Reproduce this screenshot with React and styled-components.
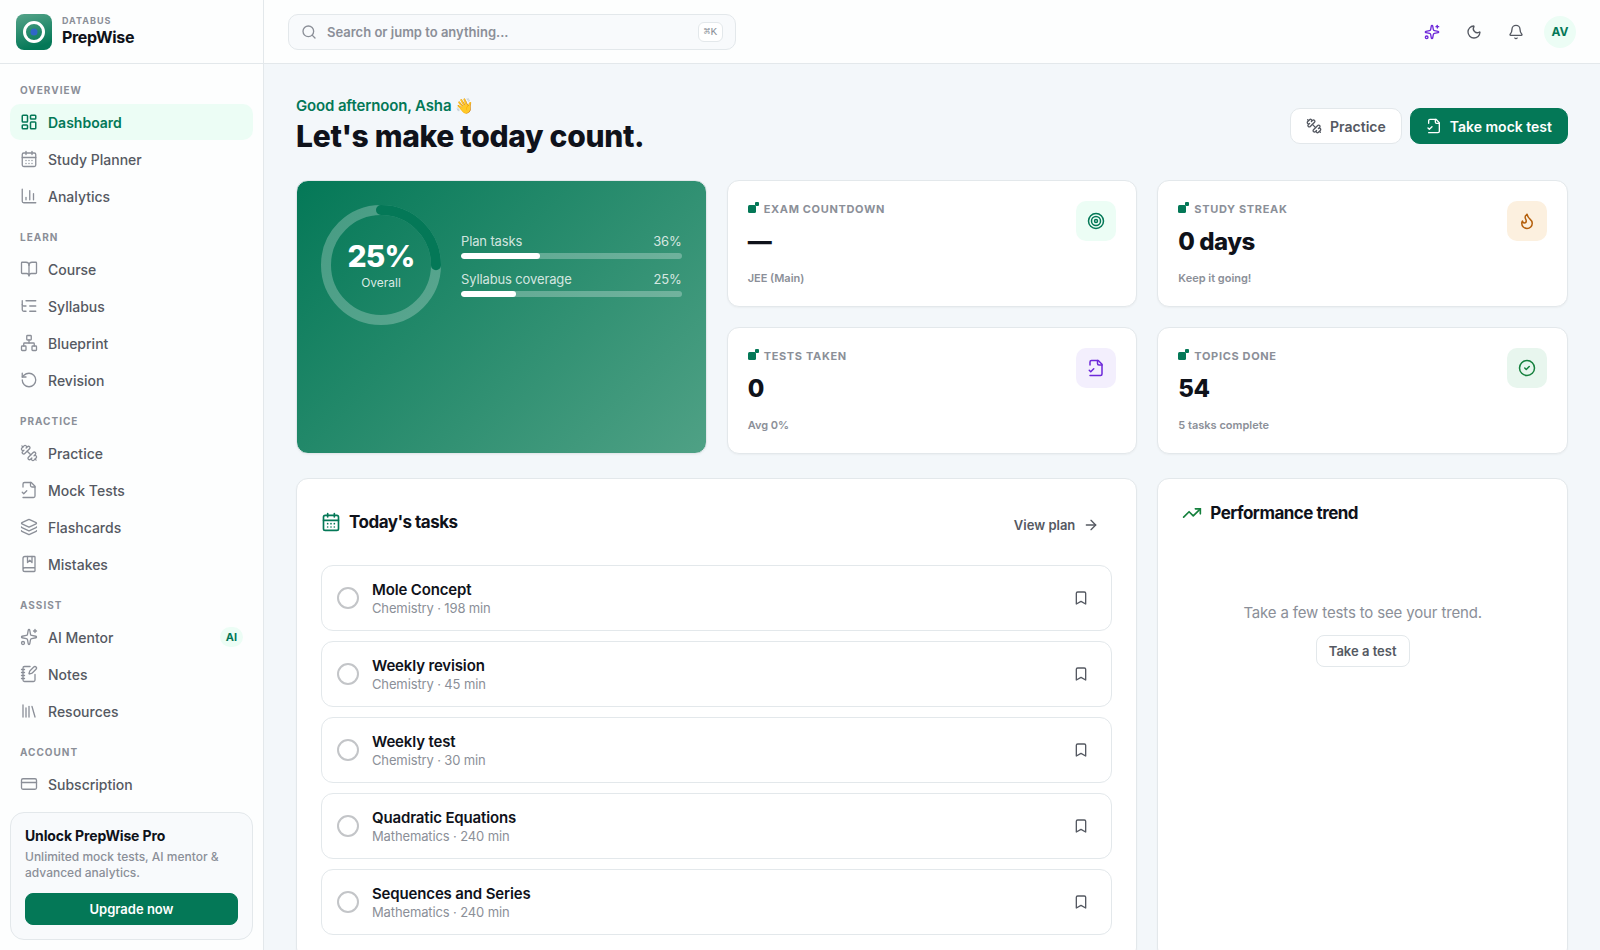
import React, { useState } from 'react'
import styled, { createGlobalStyle } from 'styled-components'
import {
    ArrowRight, Bell, BookMarked, BookOpen, Bookmark, CalendarDays, ChartColumn, CircleCheck, CreditCard,
    Flame, Layers, LayoutDashboard, Library, ListTree, Moon, Network, NotebookPen, RotateCcw,
    Search, Sparkles, Target, TrendingUp,
} from 'lucide-react'

const GlobalStyle = createGlobalStyle`
    *, *::before, *::after {
        box-sizing: border-box;
    }
    body {
        margin: 0;
        background: #f3f7fa;
        color: #0f121a;
        font-family: Inter, "Liberation Sans", sans-serif;
        font-size: 14px;
    }
    h1, h2, p {
        margin: 0;
    }
    a {
        color: inherit;
        text-decoration: none;
    }
    button, input {
        font-family: inherit;
    }
    button {
        cursor: pointer;
    }
    svg {
        flex-shrink: 0;
    }
`;

const Shell = styled.div`
    display: grid;
    grid-template-columns: 264px minmax(0, 1fr);
    height: 100vh;
`;

/* sidebar */

const Sidebar = styled.aside`
    display: flex;
    flex-direction: column;
    min-height: 0;
    background: #fdfefe;
    border-right: 1px solid #e3e8eb;
`;

const Brand = styled.a`
    display: flex;
    align-items: center;
    gap: 10px;
    height: 64px;
    padding: 0 16px;
    flex-shrink: 0;
    border-bottom: 1px solid #e3e8eb;
`;

const BrandText = styled.div`
    display: flex;
    flex-direction: column;
    padding-bottom: 2px;
`;

const BrandOwner = styled.span`
    color: #8b8f98;
    font-size: 9px;
    font-weight: 700;
    line-height: 12px;
    letter-spacing: 1px;
    text-transform: uppercase;
`;

const BrandName = styled.span`
    font-size: 16px;
    font-weight: 700;
    line-height: 20px;
    letter-spacing: -0.02em;
`;

const Nav = styled.nav`
    flex: 1;
    min-height: 0;
    display: flex;
    flex-direction: column;
    gap: 17px;
    padding: 20px 10px 0;
    overflow-y: auto;
    scrollbar-width: none;
`;

const NavGroup = styled.div`
    display: flex;
    flex-direction: column;
    gap: 1px;
`;

const NavLabel = styled.span`
    padding: 0 10px;
    margin-bottom: 7px;
    color: #8b8f98;
    font-size: 10px;
    font-weight: 700;
    line-height: 12px;
    letter-spacing: 1px;
    text-transform: uppercase;
`;

const NavItem = styled.a`
    display: flex;
    align-items: center;
    gap: 10px;
    height: 36px;
    flex-shrink: 0;
    padding: 0 10px;
    border-radius: 10px;
    background: ${({ $active }) => $active ? '#ecfdf5' : 'transparent'};
    color: ${({ $active }) => $active ? '#047857' : '#555962'};
    font-size: 14px;
    font-weight: ${({ $active }) => $active ? 600 : 500};

    svg {
        color: ${({ $active }) => $active ? '#047857' : '#8b8f98'};
    }
`;

const NavBadge = styled.span`
    margin-left: auto;
    padding: 0 6px;
    border-radius: 10px;
    background: #ecfdf5;
    color: #047857;
    font-size: 11px;
    font-weight: 700;
    line-height: 20px;
`;

const Promo = styled.section`
    margin: 10px;
    padding: 14px;
    border: 1px solid #e3e8eb;
    border-radius: 14px;
    background: #f8fafc;
`;

const PromoTitle = styled.h2`
    font-size: 14px;
    font-weight: 700;
    line-height: 18px;
    letter-spacing: -0.01em;
`;

const PromoText = styled.p`
    margin: 4px 0 12px;
    color: #8b8f98;
    font-size: 12px;
    font-weight: 500;
    line-height: 16px;
`;

/* buttons */

const Button = styled.button`
    display: inline-flex;
    align-items: center;
    justify-content: center;
    gap: 8px;
    width: ${({ $wide }) => $wide ? '100%' : 'auto'};
    height: ${({ $small }) => $small ? '32px' : '36px'};
    padding: 0 ${({ $small }) => $small ? '12px' : '15px'};
    border: 1px solid ${({ $variant }) => $variant === 'primary' ? '#047857' : $variant === 'ghost' ? 'transparent' : '#e3e8eb'};
    border-radius: ${({ $small }) => $small ? '8px' : '10px'};
    background: ${({ $variant }) => $variant === 'primary' ? '#047857' : $variant === 'ghost' ? 'transparent' : '#fff'};
    color: ${({ $variant }) => $variant === 'primary' ? '#fff' : '#555962'};
    font-size: ${({ $small }) => $small ? '13px' : '14px'};
    font-weight: 600;
    white-space: nowrap;
`;

const IconButton = styled.button`
    display: inline-flex;
    align-items: center;
    justify-content: center;
    width: ${({ $size }) => $size}px;
    height: ${({ $size }) => $size}px;
    padding: 0;
    border: 0;
    border-radius: 8px;
    background: transparent;
    color: ${({ $color }) => $color || '#555962'};
`;

/* top bar */

const Page = styled.div`
    display: flex;
    flex-direction: column;
    min-width: 0;
    min-height: 0;
`;

const TopBar = styled.header`
    display: flex;
    align-items: center;
    justify-content: space-between;
    gap: 24px;
    height: 64px;
    flex-shrink: 0;
    padding: 0 24px;
    border-bottom: 1px solid #e3e8eb;
    background: #fdfefe;
`;

const SearchBox = styled.label`
    display: flex;
    align-items: center;
    gap: 10px;
    flex: 0 1 448px;
    height: 36px;
    padding: 0 12px;
    border: 1px solid #e3e8eb;
    border-radius: 10px;
    background: #f8fafc;
    color: #8b8f98;
`;

const SearchInput = styled.input`
    flex: 1;
    min-width: 0;
    padding: 0;
    border: 0;
    outline: 0;
    background: transparent;
    font-size: 13px;
    font-weight: 600;

    &::placeholder {
        color: #8b8f98;
    }
`;

const Kbd = styled.kbd`
    padding: 0 5px;
    border: 1px solid #e3e8eb;
    border-radius: 6px;
    background: #fff;
    font-family: "Liberation Mono", monospace;
    font-size: 11px;
    line-height: 18px;
`;

const TopActions = styled.div`
    display: flex;
    align-items: center;
    gap: 6px;
`;

const Avatar = styled.button`
    width: 32px;
    height: 32px;
    margin-left: 4px;
    padding: 0;
    border: 0;
    border-radius: 50%;
    background: #ecfdf5;
    color: #047857;
    font-size: 12px;
    font-weight: 700;
`;

/* content */

const Content = styled.main`
    flex: 1;
    min-height: 0;
    padding: 32px;
    overflow-y: auto;
    scrollbar-width: none;
`;

const PageHead = styled.div`
    display: flex;
    align-items: center;
    justify-content: space-between;
    margin-bottom: 24px;
`;

const Greeting = styled.p`
    color: #047857;
    font-size: 15px;
    font-weight: 600;
    line-height: 20px;
    letter-spacing: -0.01em;
`;

const PageTitle = styled.h1`
    font-size: 30px;
    font-weight: 800;
    line-height: 40px;
    letter-spacing: -0.01em;
`;

const HeadActions = styled.div`
    display: flex;
    gap: 8px;
`;

const Grid = styled.div`
    display: grid;
    grid-template-columns: repeat(3, minmax(0, 1fr));
    gap: 20px;
    margin-bottom: 24px;
`;

const Card = styled.section`
    grid-column: span ${({ $span }) => $span || 1};
    padding: ${({ $padding }) => $padding || 24}px;
    border: 1px solid #e3e8eb;
    border-radius: 12px;
    background: #fff;
    box-shadow: 0 1px 2px rgba(15, 18, 26, 0.04);
`;

const ProgressCard = styled(Card)`
    grid-row: span 2;
    display: flex;
    align-items: flex-start;
    gap: 20px;
    background: linear-gradient(135deg, #047857, #4fa185);
    color: #fff;
`;

const Ring = styled.div`
    position: relative;
    width: 120px;
    height: 120px;
    flex-shrink: 0;
`;

const RingLabel = styled.div`
    position: absolute;
    inset: 0;
    display: flex;
    flex-direction: column;
    align-items: center;
    justify-content: center;
    font-size: 12px;
    line-height: 18px;
    color: rgba(255, 255, 255, 0.85);

    strong {
        color: #fff;
        font-size: 30px;
        font-weight: 800;
        line-height: 36px;
        letter-spacing: -0.03em;
    }
`;

const Meters = styled.div`
    flex: 1;
    display: flex;
    flex-direction: column;
    justify-content: center;
    gap: 12px;
    height: 120px;
`;

const MeterHead = styled.div`
    display: flex;
    justify-content: space-between;
    margin-bottom: 4px;
    color: rgba(255, 255, 255, 0.8);
    font-size: 13px;
    line-height: 16px;
    letter-spacing: -0.01em;
`;

const MeterTrack = styled.div`
    height: 6px;
    border-radius: 3px;
    background: rgba(255, 255, 255, 0.28);
    overflow: hidden;
`;

const MeterFill = styled.div`
    height: 100%;
    border-radius: 3px;
    background: #fff;
`;

const StatCard = styled(Card)`
    display: flex;
    align-items: flex-start;
    justify-content: space-between;
`;

const StatLabel = styled.p`
    display: flex;
    align-items: center;
    gap: 5px;
    color: #8b8f98;
    font-size: 11px;
    font-weight: 700;
    line-height: 16px;
    letter-spacing: 0.06em;
    text-transform: uppercase;
`;

const StatValue = styled.p`
    margin: 8px 0 12px;
    font-size: 24px;
    font-weight: 800;
    line-height: 33px;
    letter-spacing: -0.02em;
`;

const StatNote = styled.p`
    color: #8b8f98;
    font-size: 11px;
    font-weight: 600;
    line-height: 16px;
`;

const StatIcon = styled.div`
    display: flex;
    align-items: center;
    justify-content: center;
    width: 40px;
    height: 40px;
    border-radius: 10px;
    background: ${({ $bg }) => $bg};
    color: ${({ $color }) => $color};
`;

const CardTitle = styled.h2`
    display: flex;
    align-items: center;
    gap: 8px;
    font-size: 17px;
    font-weight: 700;
    line-height: 20px;
    letter-spacing: -0.03em;

    svg {
        color: ${({ $color }) => $color};
    }
`;

const TasksHead = styled.div`
    display: flex;
    align-items: center;
    justify-content: space-between;
    height: 38px;
    margin-bottom: 24px;

    ${Button} {
        align-self: flex-end;
    }
`;

const TaskList = styled.ul`
    display: flex;
    flex-direction: column;
    gap: 10px;
    margin: 0;
    padding: 0;
    list-style: none;
`;

const TaskRow = styled.li`
    display: flex;
    align-items: center;
    justify-content: space-between;
    padding: 14px 14px 14px 15px;
    border: 1px solid #e3e8eb;
    border-radius: 12px;
`;

const TaskLabel = styled.label`
    display: flex;
    align-items: center;
    gap: 13px;
    cursor: pointer;
`;

const TaskCheck = styled.input`
    appearance: none;
    width: 22px;
    height: 22px;
    margin: 0;
    border: 2px solid #c3c5c8;
    border-radius: 50%;
    background: #fff;

    &:checked {
        border-color: #047857;
        background: #047857;
    }
`;

const TaskName = styled.span`
    display: block;
    font-size: 15px;
    font-weight: 600;
    line-height: 20px;
    letter-spacing: -0.01em;
`;

const TaskMeta = styled.span`
    display: block;
    color: #8b8f98;
    font-size: 13px;
    line-height: 16px;
    letter-spacing: -0.01em;
`;

const Empty = styled.div`
    display: flex;
    flex-direction: column;
    align-items: center;
    gap: 12px;
    padding: 80px 0;
    color: #8b8f98;
    font-size: 15px;
    line-height: 20px;
    letter-spacing: -0.01em;
`;

function Logo() {
    return (
        <svg width="36" height="36" viewBox="0 0 36 36" aria-hidden="true">
            <defs>
                <linearGradient id="logo" x1="0" y1="0" x2="0.3" y2="1">
                    <stop offset="0" stopColor="#56a48a" />
                    <stop offset="1" stopColor="#047857" />
                </linearGradient>
            </defs>
            <rect width="36" height="36" rx="8" fill="url(#logo)" />
            <circle cx="18" cy="18" r="9.5" fill="none" stroke="#fff" strokeWidth="3" />
            <circle cx="18" cy="18" r="3.5" fill="#2f66c8" />
        </svg>
    )
}

function Dumbbell({ size = 18, strokeWidth = 2 }) {
    return (
        <svg width={size} height={size} viewBox="0 0 24 24" fill="none" stroke="currentColor" strokeWidth={strokeWidth} strokeLinecap="round" strokeLinejoin="round" aria-hidden="true">
            <path d="M14.4 14.4 9.6 9.6" />
            <path d="M18.657 21.485a2 2 0 1 1-2.829-2.828l-1.767 1.768a2 2 0 1 1-2.829-2.829l6.364-6.364a2 2 0 1 1 2.829 2.829l-1.768 1.767a2 2 0 1 1 2.828 2.829z" />
            <path d="m21.5 21.5-1.4-1.4" />
            <path d="M3.9 3.9 2.5 2.5" />
            <path d="M6.404 12.768a2 2 0 1 1-2.829-2.829l1.768-1.767a2 2 0 1 1-2.828-2.829l2.828-2.828a2 2 0 1 1 2.829 2.828l1.767-1.768a2 2 0 1 1 2.829 2.829z" />
        </svg>
    )
}

function FileCheck({ size = 18, strokeWidth = 2 }) {
    return (
        <svg width={size} height={size} viewBox="0 0 24 24" fill="none" stroke="currentColor" strokeWidth={strokeWidth} strokeLinecap="round" strokeLinejoin="round" aria-hidden="true">
            <path d="M4 22h14a2 2 0 0 0 2-2V7l-5-5H6a2 2 0 0 0-2 2v4" />
            <path d="M14 2v4a2 2 0 0 0 2 2h4" />
            <path d="m3 15 2 2 4-4" />
        </svg>
    )
}

function StatMark() {
    return (
        <svg width="11" height="16" viewBox="0 0 11 16" fill="#047857" aria-hidden="true">
            <rect x="0" y="4" width="8" height="8" rx="1.5" />
            <rect x="7" y="1" width="4" height="4" rx="1" />
        </svg>
    )
}

const NAV = [
    { label: 'Overview', items: [
        { name: 'Dashboard', icon: LayoutDashboard },
        { name: 'Study Planner', icon: CalendarDays },
        { name: 'Analytics', icon: ChartColumn },
    ] },
    { label: 'Learn', items: [
        { name: 'Course', icon: BookOpen },
        { name: 'Syllabus', icon: ListTree },
        { name: 'Blueprint', icon: Network },
        { name: 'Revision', icon: RotateCcw },
    ] },
    { label: 'Practice', items: [
        { name: 'Practice', icon: Dumbbell },
        { name: 'Mock Tests', icon: FileCheck },
        { name: 'Flashcards', icon: Layers },
        { name: 'Mistakes', icon: BookMarked },
    ] },
    { label: 'Assist', items: [
        { name: 'AI Mentor', icon: Sparkles, badge: 'AI' },
        { name: 'Notes', icon: NotebookPen },
        { name: 'Resources', icon: Library },
    ] },
    { label: 'Account', items: [
        { name: 'Subscription', icon: CreditCard },
    ] },
];

const METERS = [
    { name: 'Plan tasks', value: 36 },
    { name: 'Syllabus coverage', value: 25 },
];

const STATS = [
    { label: 'Exam countdown', value: '—', note: 'JEE (Main)', icon: Target, bg: '#ecfdf5', color: '#047857' },
    { label: 'Study streak', value: '0 days', note: 'Keep it going!', icon: Flame, bg: '#fcf0df', color: '#b45f0b' },
    { label: 'Tests taken', value: '0', note: 'Avg 0%', icon: FileCheck, bg: '#f3effd', color: '#6d28d9' },
    { label: 'Topics done', value: '54', note: '5 tasks complete', icon: CircleCheck, bg: '#e8f6ee', color: '#15803d' },
];

const TASKS = [
    { name: 'Mole Concept', meta: 'Chemistry · 198 min' },
    { name: 'Weekly revision', meta: 'Chemistry · 45 min' },
    { name: 'Weekly test', meta: 'Chemistry · 30 min' },
    { name: 'Quadratic Equations', meta: 'Mathematics · 240 min' },
    { name: 'Sequences and Series', meta: 'Mathematics · 240 min' },
];

function ProgressRing({ value }) {
    const length = 2 * Math.PI * 55;
    return (
        <Ring>
            <svg width="120" height="120" viewBox="0 0 120 120" fill="none" strokeWidth="10" aria-hidden="true">
                <circle cx="60" cy="60" r="55" stroke="rgba(255, 255, 255, 0.25)" />
                <circle cx="60" cy="60" r="55" stroke="#047857" strokeLinecap="round" strokeDasharray={`${length * value / 100} ${length}`} transform="rotate(-90 60 60)" />
            </svg>
            <RingLabel>
                <strong>{value}%</strong>
                Overall
            </RingLabel>
        </Ring>
    )
}

export default function App() {
    const [active, setActive] = useState('Dashboard');
    const [done, setDone] = useState({});

    return (
        <>
            <GlobalStyle />
            <Shell>
                <Sidebar>
                    <Brand href="#">
                        <Logo />
                        <BrandText>
                            <BrandOwner>Databus</BrandOwner>
                            <BrandName>PrepWise</BrandName>
                        </BrandText>
                    </Brand>
                    <Nav>
                        {NAV.map(({ label, items }) => (
                            <NavGroup key={label}>
                                <NavLabel>{label}</NavLabel>
                                {items.map(({ name, icon: Icon, badge }) => (
                                    <NavItem key={name} href="#" $active={active === name} onClick={() => setActive(name)}>
                                        <Icon size={18} strokeWidth={active === name ? 2 : 1.75} />
                                        {name}
                                        {badge && <NavBadge>{badge}</NavBadge>}
                                    </NavItem>
                                ))}
                            </NavGroup>
                        ))}
                    </Nav>
                    <Promo>
                        <PromoTitle>Unlock PrepWise Pro</PromoTitle>
                        <PromoText>Unlimited mock tests, AI mentor &amp; advanced analytics.</PromoText>
                        <Button $variant="primary" $small $wide>Upgrade now</Button>
                    </Promo>
                </Sidebar>

                <Page>
                    <TopBar>
                        <SearchBox>
                            <Search size={16} />
                            <SearchInput type="text" aria-label="Search" placeholder="Search or jump to anything..." />
                            <Kbd>⌘K</Kbd>
                        </SearchBox>
                        <TopActions>
                            <IconButton $size={36} $color="#6d28d9" aria-label="AI Mentor"><Sparkles size={16} /></IconButton>
                            <IconButton $size={36} aria-label="Dark mode"><Moon size={16} /></IconButton>
                            <IconButton $size={36} aria-label="Notifications"><Bell size={16} /></IconButton>
                            <Avatar>AV</Avatar>
                        </TopActions>
                    </TopBar>

                    <Content>
                        <PageHead>
                            <div>
                                <Greeting>Good afternoon, Asha 👋</Greeting>
                                <PageTitle>Let's make today count.</PageTitle>
                            </div>
                            <HeadActions>
                                <Button><Dumbbell size={16} />Practice</Button>
                                <Button $variant="primary"><FileCheck size={16} />Take mock test</Button>
                            </HeadActions>
                        </PageHead>

                        <Grid>
                            <ProgressCard>
                                <ProgressRing value={25} />
                                <Meters>
                                    {METERS.map(({ name, value }) => (
                                        <div key={name}>
                                            <MeterHead><span>{name}</span><span>{value}%</span></MeterHead>
                                            <MeterTrack><MeterFill style={{ width: `${value}%` }} /></MeterTrack>
                                        </div>
                                    ))}
                                </Meters>
                            </ProgressCard>
                            {STATS.map(({ label, value, note, icon: Icon, bg, color }) => (
                                <StatCard key={label} $padding={20}>
                                    <div>
                                        <StatLabel><StatMark />{label}</StatLabel>
                                        <StatValue>{value}</StatValue>
                                        <StatNote>{note}</StatNote>
                                    </div>
                                    <StatIcon $bg={bg} $color={color}><Icon size={18} /></StatIcon>
                                </StatCard>
                            ))}
                        </Grid>

                        <Grid>
                            <Card $span={2}>
                                <TasksHead>
                                    <CardTitle $color="#047857"><CalendarDays size={20} />Today's tasks</CardTitle>
                                    <Button $variant="ghost" $small>View plan<ArrowRight size={16} /></Button>
                                </TasksHead>
                                <TaskList>
                                    {TASKS.map(({ name, meta }) => (
                                        <TaskRow key={name}>
                                            <TaskLabel>
                                                <TaskCheck
                                                    type="checkbox"
                                                    checked={!!done[name]}
                                                    onChange={() => setDone({ ...done, [name]: !done[name] })}
                                                />
                                                <span>
                                                    <TaskName>{name}</TaskName>
                                                    <TaskMeta>{meta}</TaskMeta>
                                                </span>
                                            </TaskLabel>
                                            <IconButton $size={32} aria-label={`Bookmark ${name}`}><Bookmark size={16} /></IconButton>
                                        </TaskRow>
                                    ))}
                                </TaskList>
                            </Card>
                            <Card>
                                <CardTitle $color="#15803d"><TrendingUp size={20} />Performance trend</CardTitle>
                                <Empty>
                                    Take a few tests to see your trend.
                                    <Button $small>Take a test</Button>
                                </Empty>
                            </Card>
                        </Grid>
                    </Content>
                </Page>
            </Shell>
        </>
    )
}
